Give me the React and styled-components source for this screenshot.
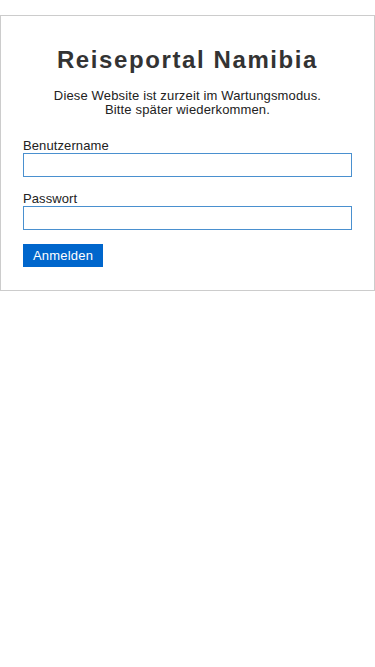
import React from 'react';
import styled, {createGlobalStyle} from 'styled-components';

const GlobalStyle = createGlobalStyle`
    body {
        margin: 0;
        background: #ffffff;
        font-family: "Liberation Sans", Arial, sans-serif;
        color: #333333;
    }
`;

const Card = styled.div`
    margin: 15px 0 0 0;
    border: 1px solid #cccccc;
    padding: 30px 22px 23px 22px;
    background: #ffffff;
`;

const Title = styled.h1`
    margin: 0;
    font-size: 24px;
    font-weight: 700;
    letter-spacing: 1.6px;
    text-align: center;
    color: #333333;
`;

const Notice = styled.p`
    margin: 15px 0 21px 0;
    font-size: 13px;
    line-height: 14px;
    letter-spacing: 0.15px;
    text-align: center;
    color: #222222;
`;

const Field = styled.div`
    display: flex;
    flex-direction: column;
    margin-bottom: 14px;
`;

const Label = styled.label`
    font-size: 13px;
    line-height: 15px;
    letter-spacing: 0.1px;
    color: #222222;
`;

const Input = styled.input`
    box-sizing: border-box;
    appearance: none;
    width: 100%;
    height: 24px;
    margin: 0;
    border: 1px solid #4a90cf;
    border-radius: 0;
    padding: 2px 4px;
    background: #ffffff;
    font-family: inherit;
    font-size: 13px;
    outline: none;
`;

const Button = styled.button`
    display: block;
    margin: 0;
    width: 80px;
    height: 23px;
    border: none;
    border-radius: 0;
    background: #0066cc;
    color: #ffffff;
    font-family: inherit;
    font-size: 13px;
    letter-spacing: 0.2px;
    padding: 0;
`;

const App = () => {
    return (
        <>
            <GlobalStyle />
            <Card>
                <Title>Reiseportal Namibia</Title>
                <Notice>Diese Website ist zurzeit im Wartungsmodus.<br />Bitte später wiederkommen.</Notice>
                <form onSubmit={e => e.preventDefault()}>
                    <Field>
                        <Label htmlFor="user">Benutzername</Label>
                        <Input id="user" type="text" />
                    </Field>
                    <Field>
                        <Label htmlFor="pass">Passwort</Label>
                        <Input id="pass" type="password" />
                    </Field>
                    <Button type="submit">Anmelden</Button>
                </form>
            </Card>
        </>
    );
};

export default App;
